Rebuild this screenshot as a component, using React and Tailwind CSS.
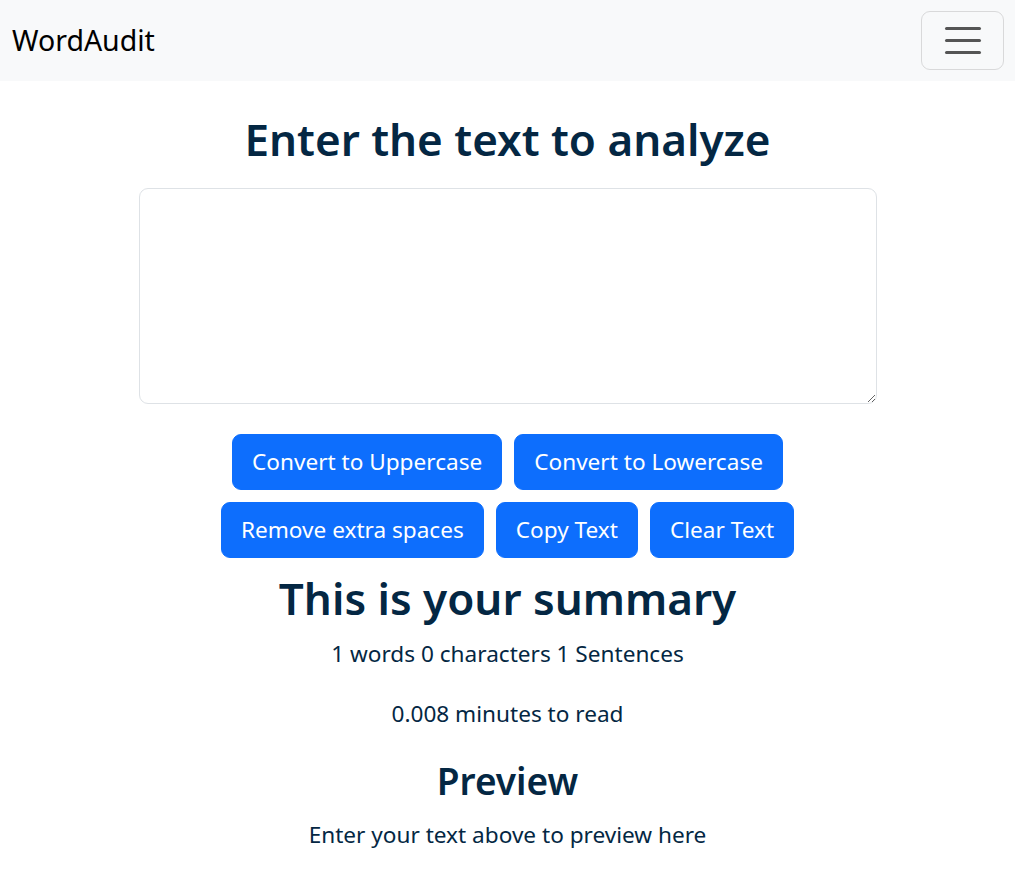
import React, { useState } from 'react';

const font = { fontFamily: '"Noto Sans", "Open Sans", sans-serif' };

const Btn = ({ children, onClick }) => (
  <button
    onClick={onClick}
    className="bg-[#0d6efd] text-white text-[22.6px] leading-[36px] px-[19px] py-[9px] rounded-[9px] border border-[#0d6efd]"
  >
    {children}
  </button>
);

export default function App() {
  const [text, setText] = useState('');

  const words = text.split(/\s+/).filter((w) => w.length !== 0).length || 1;

  return (
    <div className="min-h-screen bg-white text-[#042743]" style={font}>
      {/* Navbar */}
      <nav className="h-[81px] bg-[#f8f9fa] flex items-center justify-between pl-[12px] pr-[11px]">
        <span className="text-[28.5px] leading-[45px] text-black">WordAudit</span>
        <button className="w-[83px] h-[59px] border border-[#d9d9da] rounded-[9px] flex flex-col items-center justify-center gap-[9px]">
          <span className="block w-[36px] h-[3px] bg-[#555] rounded-full" />
          <span className="block w-[36px] h-[3px] bg-[#555] rounded-full" />
          <span className="block w-[36px] h-[3px] bg-[#555] rounded-full" />
        </button>
      </nav>

      <div className="w-[738px] mx-auto flex flex-col items-center">
        <h1 className="mt-[29px] text-[44px] leading-[58px] font-semibold">Enter the text to analyze</h1>
        <textarea
          value={text}
          onChange={(e) => setText(e.target.value)}
          className="mt-[20px] w-full h-[216px] border border-[#dee2e6] rounded-[9px] p-[12px] text-[22.6px] outline-none"
        />

        <div className="mt-[30px] flex flex-col items-center gap-[12px]">
          <div className="flex gap-[12px]">
            <Btn onClick={() => setText(text.toUpperCase())}>Convert to Uppercase</Btn>
            <Btn onClick={() => setText(text.toLowerCase())}>Convert to Lowercase</Btn>
          </div>
          <div className="flex gap-[12px]">
            <Btn onClick={() => setText(text.split(/\s+/).join(' '))}>Remove extra spaces</Btn>
            <Btn onClick={() => navigator.clipboard?.writeText(text)}>Copy Text</Btn>
            <Btn onClick={() => setText('')}>Clear Text</Btn>
          </div>
        </div>

        {/* Summary */}
        <h1 className="mt-[11px] text-[44px] leading-[58px] font-semibold">This is your summary</h1>
        <p className="mt-[9px] text-[22.6px] leading-[36px]">
          {words} words {text.length} characters 1 Sentences
        </p>
        <p className="mt-[24px] text-[22.6px] leading-[36px]">{(0.008 * words).toFixed(3)} minutes to read</p>
        <h2 className="mt-[24px] text-[37px] leading-[49px] font-semibold">Preview</h2>
        <p className="mt-[12px] text-[22.6px] leading-[36px]">
          {text.length > 0 ? text : 'Enter your text above to preview here'}
        </p>
      </div>
    </div>
  );
}
